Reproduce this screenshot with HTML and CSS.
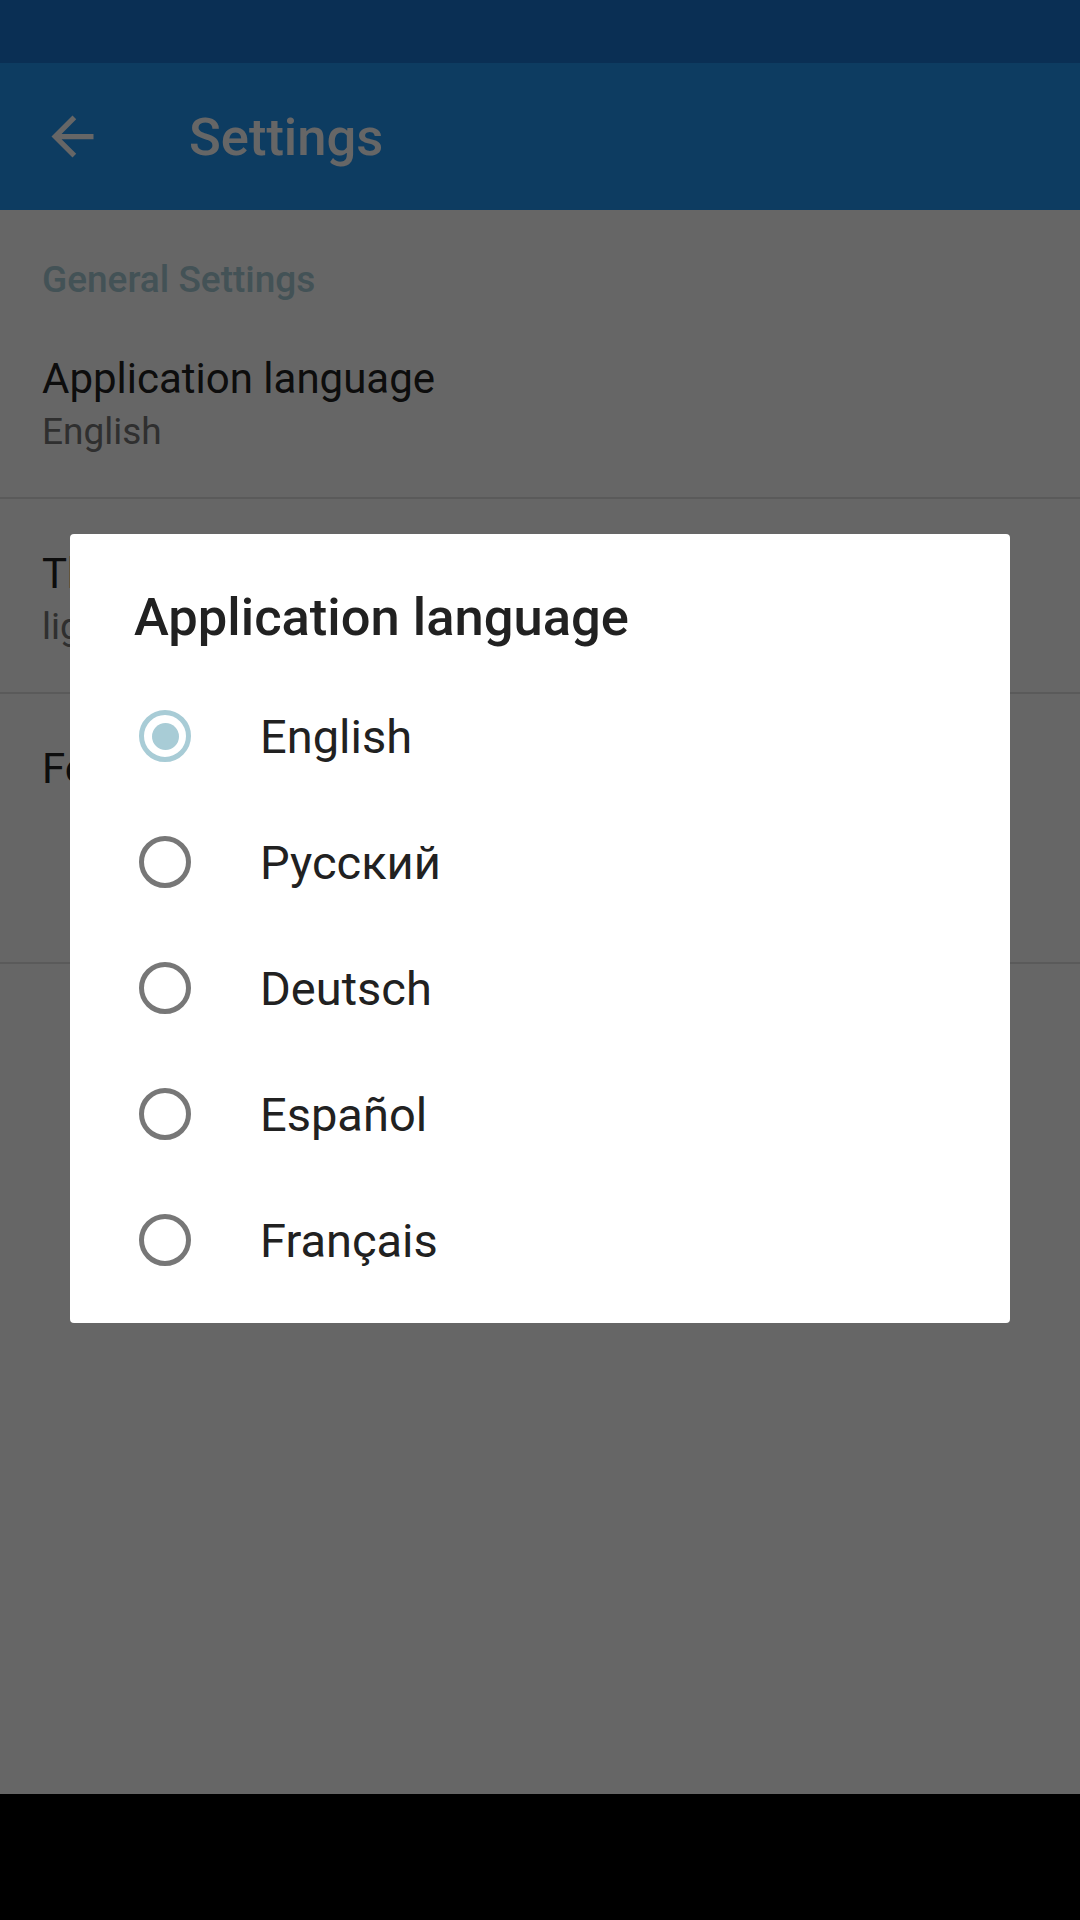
FILE: index.html
```html
<!DOCTYPE html>
<html lang="en">
<head>
  <meta charset="UTF-8">
  <title>Settings</title>
  <link rel="stylesheet" href="styles.css">
</head>
<body>
  <div id="screen">
    <div class="status-bar"></div>

    <header class="toolbar">
      <svg class="back-icon" viewBox="0 0 24 24" width="63" height="63">
        <path d="M20 11H7.83l5.59-5.59L12 4l-8 8 8 8 1.41-1.41L7.83 13H20v-2z" fill="#fff"/>
      </svg>
      <h1 class="toolbar-title">Settings</h1>
    </header>

    <main class="prefs">
      <div class="pref-category">General Settings</div>
      <div class="pref">
        <div class="pref-title">Application language</div>
        <div class="pref-summary">English</div>
      </div>
      <div class="pref">
        <div class="pref-title">Theme</div>
        <div class="pref-summary">light</div>
      </div>
      <div class="pref pref-tall">
        <div class="pref-title">Font size</div>
      </div>
    </main>

    <div class="nav-bar"></div>
  </div>

  <div id="scrim">
    <div class="dialog">
      <h2 class="dialog-title">Application language</h2>
      <ul class="choices">
        <li class="choice checked"><span class="radio"></span>English</li>
        <li class="choice"><span class="radio"></span>Русский</li>
        <li class="choice"><span class="radio"></span>Deutsch</li>
        <li class="choice"><span class="radio"></span>Español</li>
        <li class="choice"><span class="radio"></span>Français</li>
      </ul>
    </div>
  </div>
</body>
</html>
```

FILE: styles.css
```css
html, body {
  margin: 0;
  padding: 0;
}
body {
  font-family: Roboto, 'Noto Sans', sans-serif;
  background-color: #000;
  color: #212121;
}
#screen {
  display: flex;
  flex-direction: column;
  height: 1920px;
}
.status-bar {
  height: 63px;
  background-color: #1976d2;
}
.toolbar {
  height: 147px;
  background-color: #2196f3;
  display: flex;
  align-items: center;
  padding-left: 41px;
}
.back-icon {
  display: block;
}
.toolbar-title {
  margin: 0 0 0 85px;
  font-size: 52.5px;
  font-weight: 500;
  color: #fff;
  line-height: 60px;
}
.prefs {
  flex: 1;
  background-color: #ffffff;
}
.pref-category {
  padding: 48px 42px 2px;
  font-size: 37px;
  font-weight: 500;
  line-height: 44px;
  color: #a8ccd6;
}
.pref {
  box-sizing: border-box;
  height: 195px;
  padding: 51px 42px 0;
  border-bottom: 2px solid #e0e0e0;
}
.pref-tall {
  height: 270px;
}
.pref-title {
  font-size: 42px;
  line-height: 48px;
  color: #212121;
}
.pref-summary {
  margin-top: 7px;
  font-size: 37px;
  line-height: 44px;
  color: #757575;
}
.nav-bar {
  height: 126px;
  background-color: #000;
}

/* dialog over the settings list */
#scrim {
  position: fixed;
  left: 0;
  top: 0;
  width: 1080px;
  height: 1794px;
  background-color: rgba(0, 0, 0, 0.6);
  box-sizing: border-box;
  padding: 63px 70px 0;
  display: flex;
  align-items: center;
}
.dialog {
  flex: 1;
  background-color: #fff;
  border-radius: 4px;
  padding: 53px 0 20px;
}
.dialog-title {
  margin: 0 0 26px;
  padding: 0 64px;
  font-size: 52.5px;
  font-weight: 500;
  line-height: 60px;
  color: #212121;
}
.choices {
  list-style: none;
  margin: 0;
  padding: 0;
}
.choice {
  height: 126px;
  display: flex;
  align-items: center;
  padding-left: 69px;
  font-size: 47px;
  color: #212121;
}
.radio {
  width: 52px;
  height: 52px;
  box-sizing: border-box;
  border: 5px solid #777;
  border-radius: 50%;
  margin-right: 69px;
  display: flex;
  align-items: center;
  justify-content: center;
  flex-shrink: 0;
}
.checked .radio {
  border-color: #a8ccd6;
}
.checked .radio::after {
  content: "";
  width: 27px;
  height: 27px;
  border-radius: 50%;
  background-color: #a8ccd6;
}
```
